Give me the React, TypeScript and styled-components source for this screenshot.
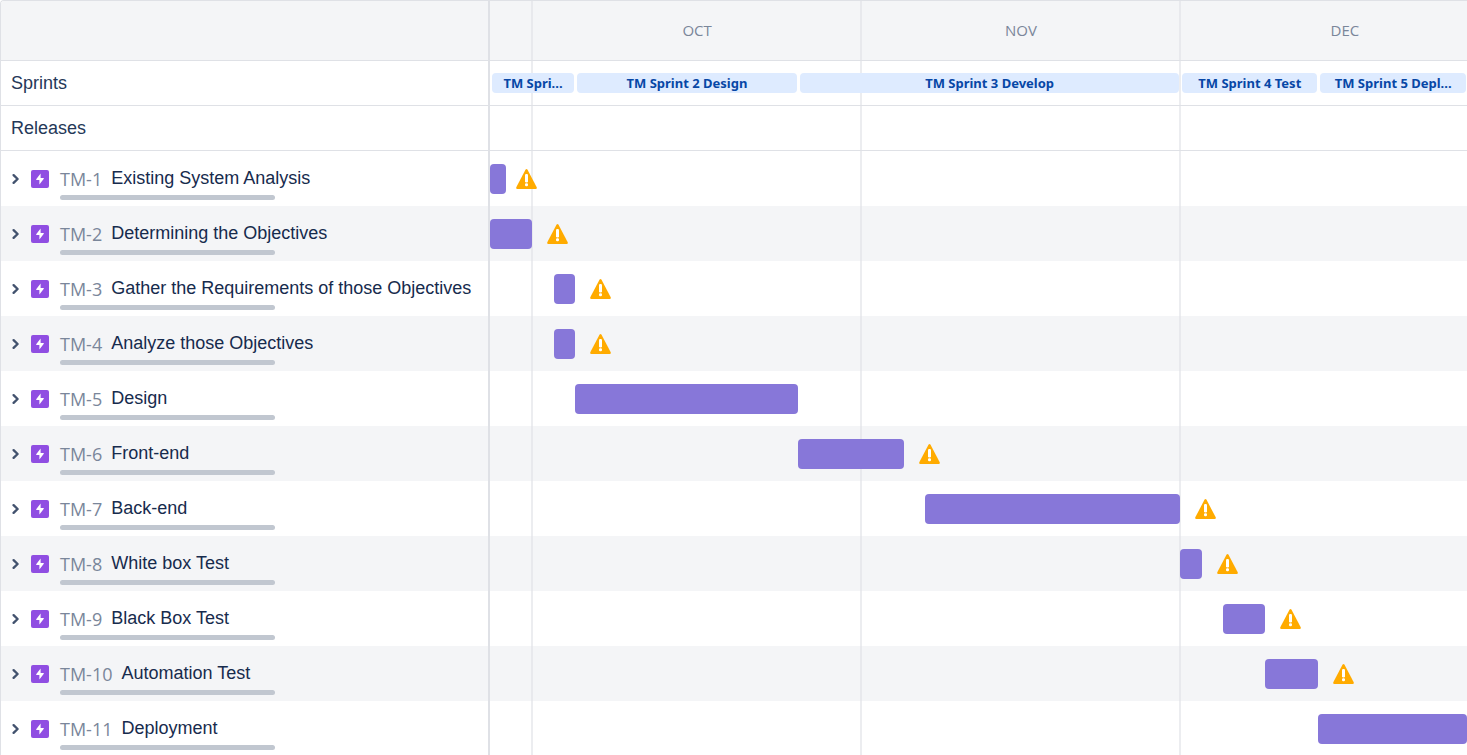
import React from "react";
import styled, { createGlobalStyle } from "styled-components";

const DAYS = 92;

const months = [
  { label: "", days: 4 },
  { label: "OCT", days: 31 },
  { label: "NOV", days: 30 },
  { label: "DEC", days: 31 },
];

const sprints = [
  { label: "TM Spri...", start: 0, end: 8 },
  { label: "TM Sprint 2 Design", start: 8, end: 29 },
  { label: "TM Sprint 3 Develop", start: 29, end: 65 },
  { label: "TM Sprint 4 Test", start: 65, end: 78 },
  { label: "TM Sprint 5 Depl...", start: 78, end: 92 },
];

const epics = [
  { id: "TM-1", name: "Existing System Analysis", start: 0, end: 1, late: true },
  { id: "TM-2", name: "Determining the Objectives", start: 0, end: 4, late: true },
  { id: "TM-3", name: "Gather the Requirements of those Objectives", start: 6, end: 8, late: true },
  { id: "TM-4", name: "Analyze those Objectives", start: 6, end: 8, late: true },
  { id: "TM-5", name: "Design", start: 8, end: 29, late: false },
  { id: "TM-6", name: "Front-end", start: 29, end: 39, late: true },
  { id: "TM-7", name: "Back-end", start: 41, end: 65, late: true },
  { id: "TM-8", name: "White box Test", start: 65, end: 67, late: true },
  { id: "TM-9", name: "Black Box Test", start: 69, end: 73, late: true },
  { id: "TM-10", name: "Automation Test", start: 73, end: 78, late: true },
  { id: "TM-11", name: "Deployment", start: 78, end: 92, late: false },
];

const GlobalStyle = createGlobalStyle`
  *, *::before, *::after { box-sizing: border-box; }
  body {
    margin: 0;
    background: #ffffff;
    color: #172b4d;
    font-family: "Liberation Sans", Arial, sans-serif;
  }
`;

const Roadmap = styled.main`
  position: relative;
  max-height: 100vh;
  overflow-x: hidden;
  overflow-y: auto;
  scrollbar-width: none;
  border-top: 1px solid #dfe1e6;
  border-left: 1px solid #dfe1e6;
  border-top-left-radius: 4px;
`;

const Row = styled.div<{ $height: number; $shaded?: boolean; $ruled?: boolean }>`
  display: grid;
  grid-template-columns: 489px minmax(0, 1fr);
  height: ${(p) => p.$height}px;
  background: ${(p) => (p.$shaded ? "#f4f5f7" : "#ffffff")};
  border-bottom: ${(p) => (p.$ruled ? "1px solid #dfe1e6" : "none")};
`;

const SideCell = styled.div`
  display: flex;
  align-items: center;
  min-width: 0;
  padding-left: 10px;
  border-right: 2px solid #dfe1e6;
`;

const SideLabel = styled.span`
  font-size: 18px;
  line-height: 20px;
  color: #253858;
`;

const Months = styled.div`
  display: flex;
  min-width: 0;
  overflow: hidden;
`;

const Month = styled.div<{ $days: number }>`
  flex: 0 0 calc(100% * ${(p) => p.$days} / ${DAYS});
  display: flex;
  align-items: center;
  justify-content: center;
  padding-bottom: 1px;
  color: #7a869a;
  font-family: "Open Sans", "Noto Sans", sans-serif;
  font-size: 15px;
  line-height: 20px;
`;

const MonthLines = styled.div`
  position: absolute;
  top: 0;
  left: 490px;
  right: 0;
  height: 100%;
  display: flex;
  overflow: hidden;
  pointer-events: none;
`;

const MonthLine = styled.div<{ $days: number }>`
  flex: 0 0 calc(100% * ${(p) => p.$days} / ${DAYS});
  border-right: 2px solid rgba(223, 225, 230, 0.6);
`;

const Track = styled.div`
  position: relative;
  z-index: 1;
  display: grid;
  grid-template-columns: repeat(${DAYS}, minmax(0, 1fr));
  align-items: center;
  min-width: 0;
`;

const SprintChip = styled.div<{ $start: number; $end: number }>`
  grid-row: 1;
  grid-column: ${(p) => p.$start + 1} / ${(p) => p.$end + 1};
  height: 20px;
  margin: 0 1px 0 2px;
  border-radius: 4px;
  background: #deebff;
  color: #0747a6;
  font-family: "Noto Sans", "Open Sans", sans-serif;
  font-size: 13px;
  font-weight: 700;
  line-height: 20px;
  text-align: center;
  white-space: nowrap;
  overflow: hidden;
`;

const Bar = styled.div<{ $start: number; $end: number }>`
  grid-row: 1;
  grid-column: ${(p) => p.$start + 1} / ${(p) => p.$end + 1};
  height: 30px;
  min-width: 16px;
  border-radius: 4px;
  background: #8777d9;
`;

const Warning = styled.svg<{ $day: number }>`
  grid-row: 1;
  grid-column: ${(p) => p.$day + 1};
  width: 21px;
  height: 20px;
  margin-left: 15px;
`;

const ExpandButton = styled.button`
  display: flex;
  width: 10px;
  height: 20px;
  padding: 0;
  align-items: center;
  justify-content: center;
  border: 0;
  background: none;
  cursor: pointer;
`;

const EpicIcon = styled.svg`
  flex: none;
  width: 18px;
  height: 18px;
  margin: 0 11px 0 10px;
`;

const Epic = styled.div`
  display: flex;
  flex: 1;
  flex-direction: column;
  gap: 5px;
  min-width: 0;
  padding-top: 8px;
`;

const EpicText = styled.div`
  display: flex;
  align-items: center;
  gap: 9px;
  height: 24px;
  white-space: nowrap;
`;

const EpicKey = styled.a`
  padding-top: 3px;
  color: #7a869a;
  font-family: "Open Sans", "Noto Sans", sans-serif;
  font-size: 18px;
  line-height: 20px;
  text-decoration: none;
`;

const EpicName = styled.span`
  font-size: 18px;
  line-height: 20px;
`;

const Progress = styled.div`
  width: 215px;
  height: 5px;
  border-radius: 3px;
  background: #c1c7d0;
`;

export default function App() {
  return (
    <>
      <GlobalStyle />
      <Roadmap>
        <Row $height={60} $shaded $ruled>
          <SideCell />
          <Months>
            {months.map((m) => (
              <Month key={m.label} $days={m.days}>
                {m.label}
              </Month>
            ))}
          </Months>
        </Row>
        <Row $height={45} $ruled>
          <SideCell>
            <SideLabel>Sprints</SideLabel>
          </SideCell>
          <Track>
            {sprints.map((s) => (
              <SprintChip key={s.label} $start={s.start} $end={s.end}>
                {s.label}
              </SprintChip>
            ))}
          </Track>
        </Row>
        <Row $height={45} $ruled>
          <SideCell>
            <SideLabel>Releases</SideLabel>
          </SideCell>
          <Track />
        </Row>
        {epics.map((e, i) => (
          <Row key={e.id} $height={55} $shaded={i % 2 === 1}>
            <SideCell>
              <ExpandButton type="button" aria-label={`Expand ${e.id}`}>
                <svg width="10" height="12" viewBox="0 0 10 12" aria-hidden="true">
                  <path
                    d="M2.6 2.2L6.6 6L2.6 9.8"
                    fill="none"
                    stroke="#42526e"
                    strokeWidth="2.4"
                    strokeLinecap="round"
                    strokeLinejoin="round"
                  />
                </svg>
              </ExpandButton>
              <EpicIcon viewBox="0 0 18 18" aria-hidden="true">
                <rect width="18" height="18" rx="2" fill="#904ee2" />
                <path
                  d="M9.6 3.6L5.2 9.2Q4.9 9.9 5.6 9.9H8.4V14.4L12.8 8.8Q13.1 8.1 12.4 8.1H9.6Z"
                  fill="#ffffff"
                />
              </EpicIcon>
              <Epic>
                <EpicText>
                  <EpicKey href={`#${e.id}`}>{e.id}</EpicKey>
                  <EpicName>{e.name}</EpicName>
                </EpicText>
                <Progress />
              </Epic>
            </SideCell>
            <Track>
              <Bar $start={e.start} $end={e.end} />
              {e.late && (
                <Warning $day={e.end} viewBox="0 0 21 20" aria-hidden="true">
                  <path
                    d="M9.6 0.6Q10.5 -0.6 11.4 0.6L20.7 18.3Q21.2 20 19.7 20H1.3Q-0.2 20 0.3 18.3Z"
                    fill="#ffab00"
                  />
                  <rect x="9" y="5" width="3" height="8.5" rx="1.2" fill="#ffffff" />
                  <rect x="9" y="14.2" width="3" height="3" rx="1.2" fill="#ffffff" />
                </Warning>
              )}
            </Track>
          </Row>
        ))}
        <MonthLines>
          {months.slice(0, 3).map((m) => (
            <MonthLine key={m.label} $days={m.days} />
          ))}
        </MonthLines>
      </Roadmap>
    </>
  );
}
